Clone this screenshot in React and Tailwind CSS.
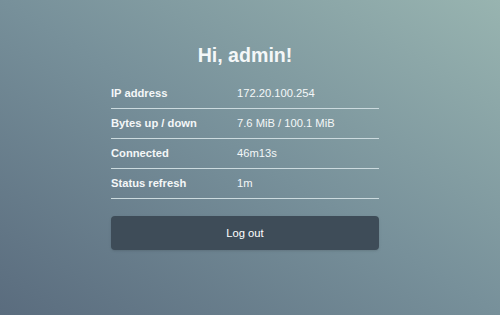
export default function App() {
  const rows = [
    ["IP address", "172.20.100.254"],
    ["Bytes up / down", "7.6 MiB / 100.1 MiB"],
    ["Connected", "46m13s"],
    ["Status refresh", "1m"],
  ];

  return (
    <main
      className="w-[500px] h-[315px] overflow-hidden bg-linear-to-tr from-[#5a6c7e] via-[#77909a] to-[#98b4b0] text-[#f4f7f8]"
      style={{ fontFamily: '"Liberation Sans", Arial, sans-serif' }}
    >
      <div className="w-[268px] ml-[111px] pt-[43px]">
        <h1 className="text-[19.6px] leading-[24px] font-bold text-center">Hi, admin!</h1>

        <div className="mt-[12px]">
          {rows.map(([label, value]) => (
            <div
              key={label}
              className="h-[30px] flex items-center text-[11.2px] border-b border-[#cbdade]"
            >
              <span className="w-[126px] font-bold">{label}</span>
              <span>{value}</span>
            </div>
          ))}
        </div>

        <button className="mt-[17px] w-full h-[34px] rounded-[4px] bg-[#3e4c58] text-[11.2px] text-white shadow-sm">
          Log out
        </button>
      </div>
    </main>
  );
}
